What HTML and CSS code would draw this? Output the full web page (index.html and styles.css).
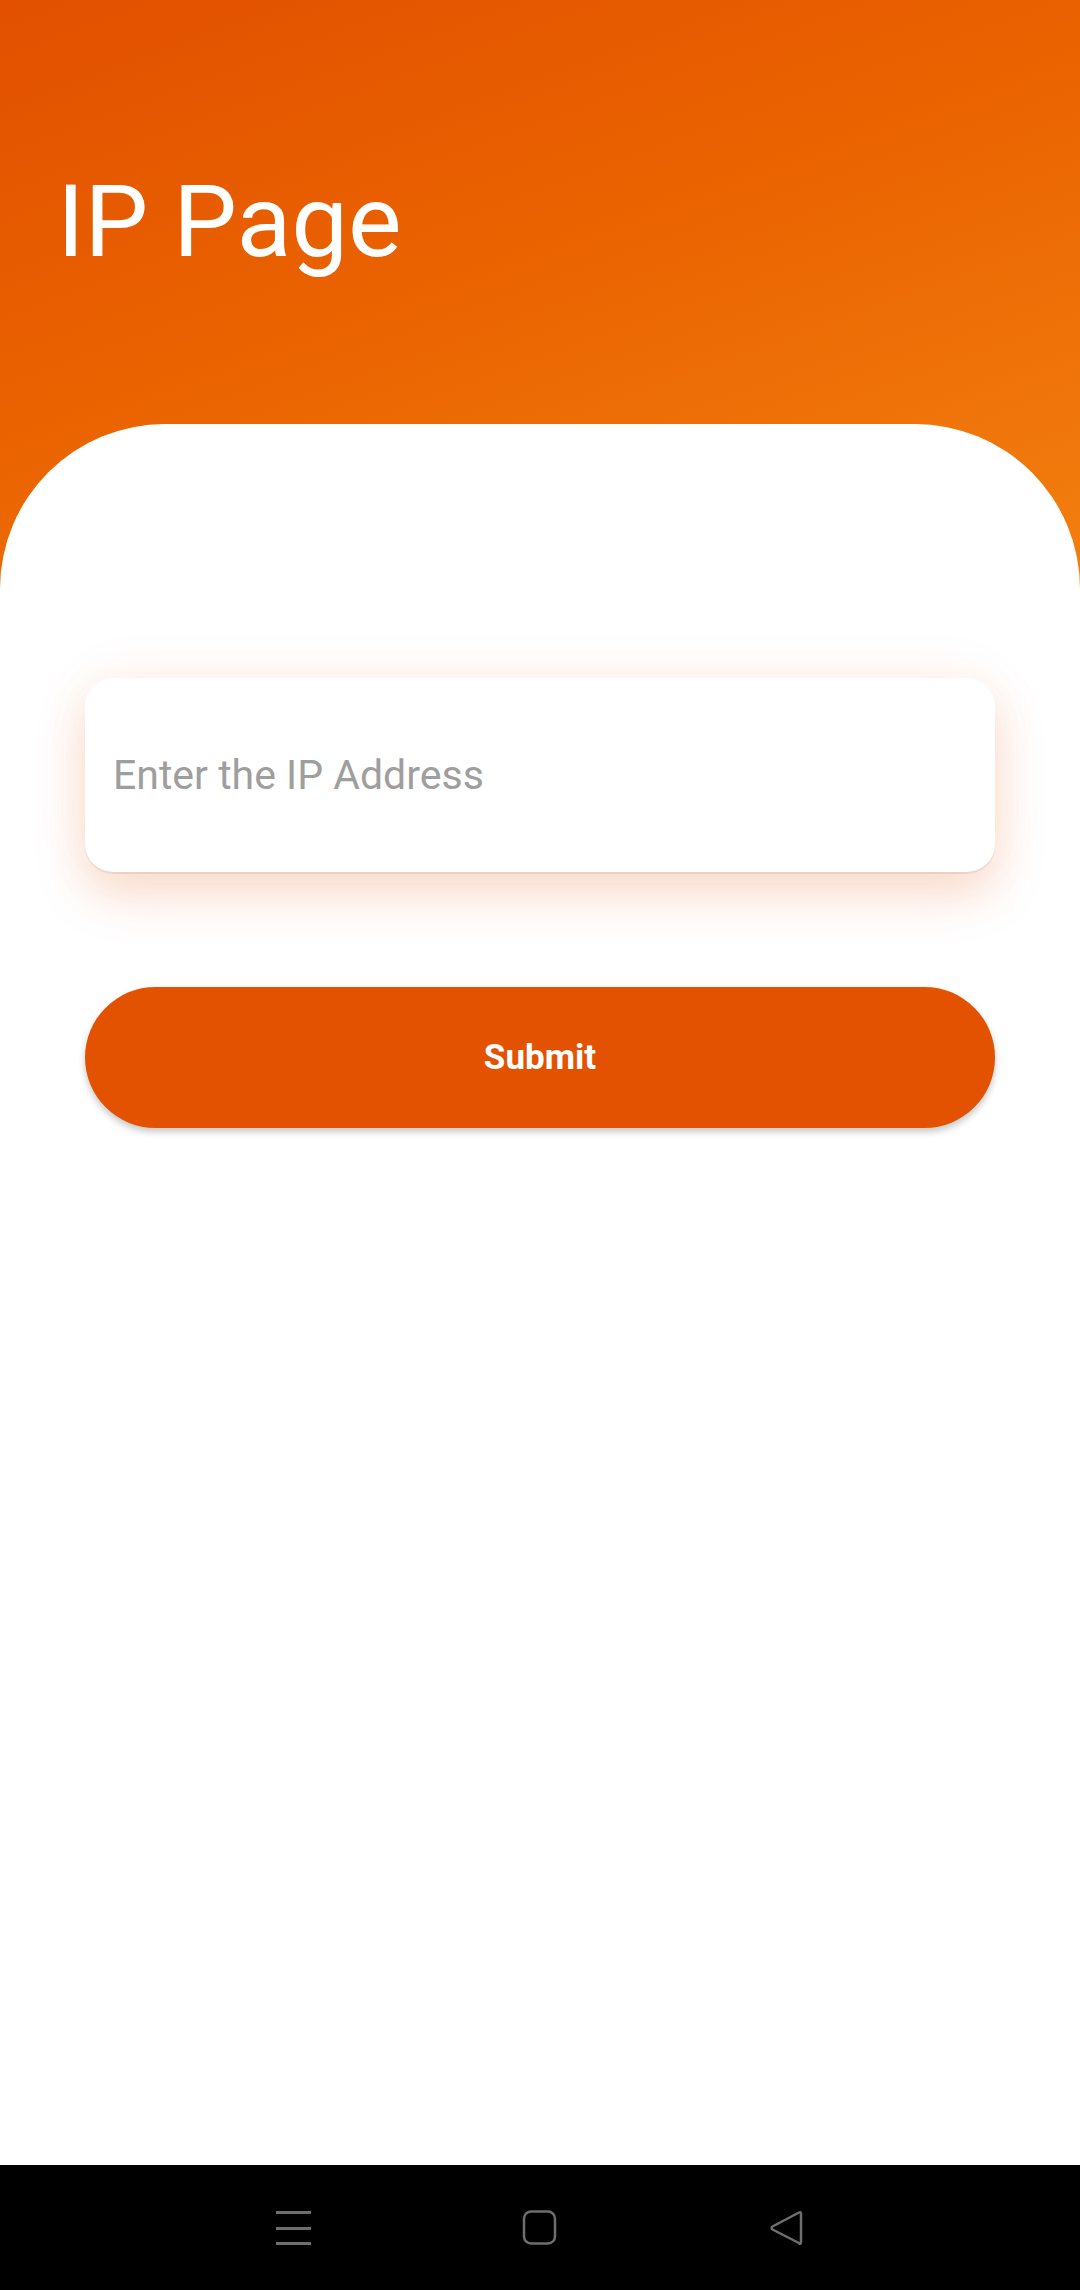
FILE: index.html
```html
<!DOCTYPE html>
<html lang="en">
<head>
<meta charset="utf-8">
<title>IP Page</title>
<link rel="stylesheet" href="styles.css">
</head>
<body>
<div class="app">
  <header class="hero">
    <h1 class="title">IP Page</h1>
  </header>
  <main class="sheet">
    <div class="field">
      <input class="field-input" type="text" placeholder="Enter the IP Address">
    </div>
    <button class="submit" type="button">Submit</button>
  </main>
  <nav class="navbar">
    <svg class="nav-icon" width="40" height="40" viewBox="0 0 40 40">
      <rect x="3" y="3" width="35" height="3" fill="#6e6e6e"/>
      <rect x="3" y="19" width="35" height="3" fill="#6e6e6e"/>
      <rect x="3" y="34" width="35" height="3" fill="#6e6e6e"/>
    </svg>
    <svg class="nav-icon" width="40" height="40" viewBox="0 0 40 40">
      <rect x="4" y="3.5" width="31" height="32" rx="7" fill="none" stroke="#6e6e6e" stroke-width="2.5"/>
    </svg>
    <svg class="nav-icon" width="40" height="40" viewBox="0 0 40 40">
      <path d="M34 5.5 L34 34 Q34 37 32 35 L5.5 21.5 Q3.5 20 5.5 18.5 L32 4.5 Q34 3.5 34 5.5 Z" fill="none" stroke="#6e6e6e" stroke-width="2.5" stroke-linejoin="round"/>
    </svg>
  </nav>
</div>
</body>
</html>
```

FILE: styles.css
```css
* {
  box-sizing: border-box;
}

html, body {
  margin: 0;
  padding: 0;
}

body {
  width: 1080px;
  height: 2290px;
  font-family: Roboto, "Noto Sans", Arial, sans-serif;
  background: #ffffff;
  overflow: hidden;
}

.app {
  display: flex;
  flex-direction: column;
  width: 1080px;
  height: 2290px;
}

.hero {
  height: 600px;
  flex: 0 0 600px;
  background: linear-gradient(160deg, #e25000 0%, #ea6300 45%, #f38010 100%);
  padding: 171px 0 0 57px;
}

.title {
  margin: 0;
  font-size: 101px;
  line-height: 101px;
  font-weight: 400;
  color: #ffffff;
}

.sheet {
  position: relative;
  flex: 1 1 auto;
  margin-top: -176px;
  background: #ffffff;
  border-radius: 165px 165px 0 0;
  padding: 254px 85px 0 85px;
  display: flex;
  flex-direction: column;
  gap: 115px;
}

.field {
  height: 194px;
  background: #ffffff;
  border-radius: 28px;
  box-shadow: 0 2px 1px rgba(0, 0, 0, 0.07), 0 22px 50px rgba(232, 96, 30, 0.22), 0 0 60px rgba(232, 96, 30, 0.06);
  display: flex;
  align-items: center;
  padding: 0 28px;
}

.field-input {
  width: 100%;
  border: none;
  outline: none;
  background: transparent;
  font-family: Roboto, "Noto Sans", Arial, sans-serif;
  font-size: 41px;
  color: #333333;
  padding: 0;
  margin: 0;
}

.field-input::placeholder {
  color: #9e9e9e;
}

.submit {
  height: 141px;
  border: none;
  border-radius: 71px;
  background: #e35200;
  color: #ffffff;
  font-family: Roboto, "Noto Sans", Arial, sans-serif;
  font-weight: 700;
  font-size: 35px;
  box-shadow: 0 4px 7px rgba(0, 0, 0, 0.22);
  padding: 0;
}

.navbar {
  flex: 0 0 125px;
  height: 125px;
  background: #000000;
  display: flex;
  justify-content: center;
  align-items: center;
  gap: 207px;
}

.nav-icon {
  display: block;
}
```
